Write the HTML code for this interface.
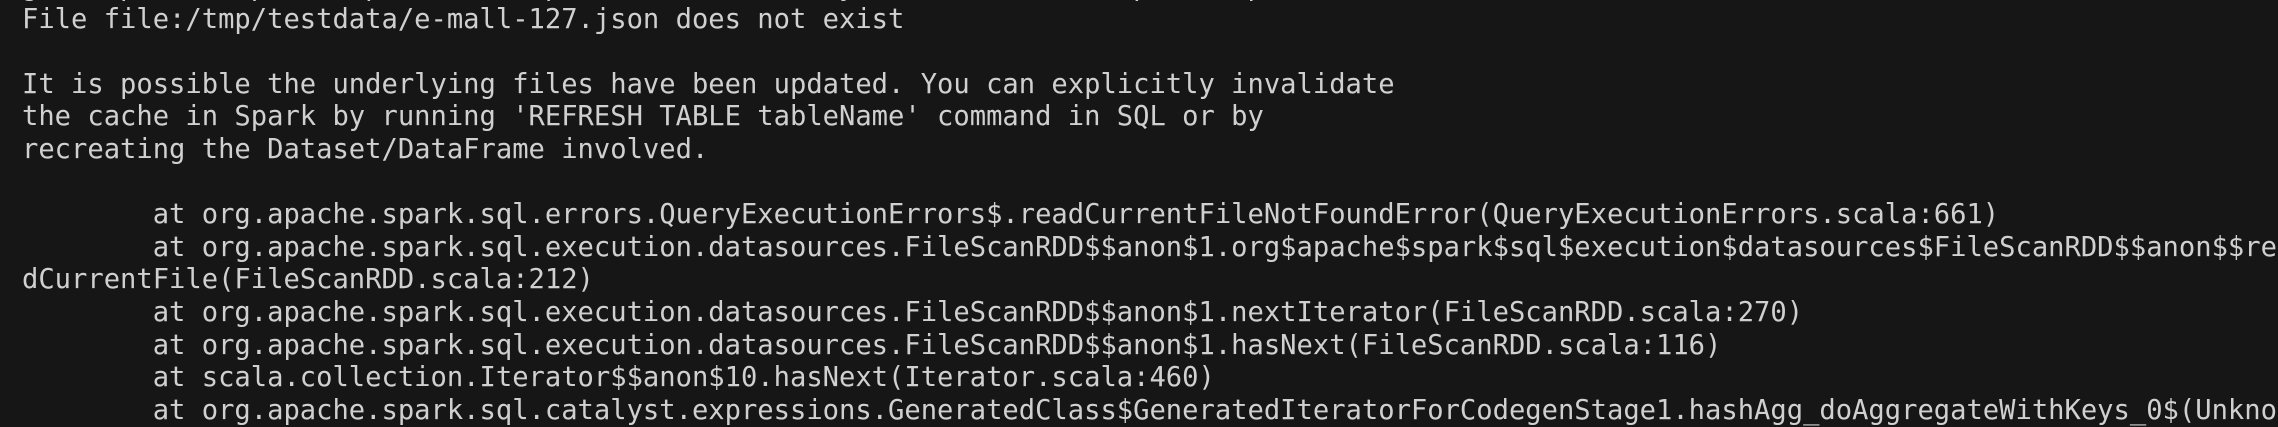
<!DOCTYPE html>
<html><head><style>
html,body{margin:0;padding:0;background:#161616;width:2278px;height:418px;overflow:hidden}
pre{position:absolute;left:22px;top:-29px;margin:0;font-family:"DejaVu Sans Mono","Liberation Mono",monospace;font-size:27.15px;line-height:32.6px;color:#d0d0d0;white-space:pre;width:2256px;overflow:hidden}
</style></head><body>
<pre>g     p     , p   ,  p    ,     p   ,          ,  y             ,   p   ,  p
File file:/tmp/testdata/e-mall-127.json does not exist

It is possible the underlying files have been updated. You can explicitly invalidate
the cache in Spark by running 'REFRESH TABLE tableName' command in SQL or by
recreating the Dataset/DataFrame involved.

        at org.apache.spark.sql.errors.QueryExecutionErrors$.readCurrentFileNotFoundError(QueryExecutionErrors.scala:661)
        at org.apache.spark.sql.execution.datasources.FileScanRDD$$anon$1.org$apache$spark$sql$execution$datasources$FileScanRDD$$anon$$re
dCurrentFile(FileScanRDD.scala:212)
        at org.apache.spark.sql.execution.datasources.FileScanRDD$$anon$1.nextIterator(FileScanRDD.scala:270)
        at org.apache.spark.sql.execution.datasources.FileScanRDD$$anon$1.hasNext(FileScanRDD.scala:116)
        at scala.collection.Iterator$$anon$10.hasNext(Iterator.scala:460)
        at org.apache.spark.sql.catalyst.expressions.GeneratedClass$GeneratedIteratorForCodegenStage1.hashAgg_doAggregateWithKeys_0$(Unkno</pre>
</body></html>
